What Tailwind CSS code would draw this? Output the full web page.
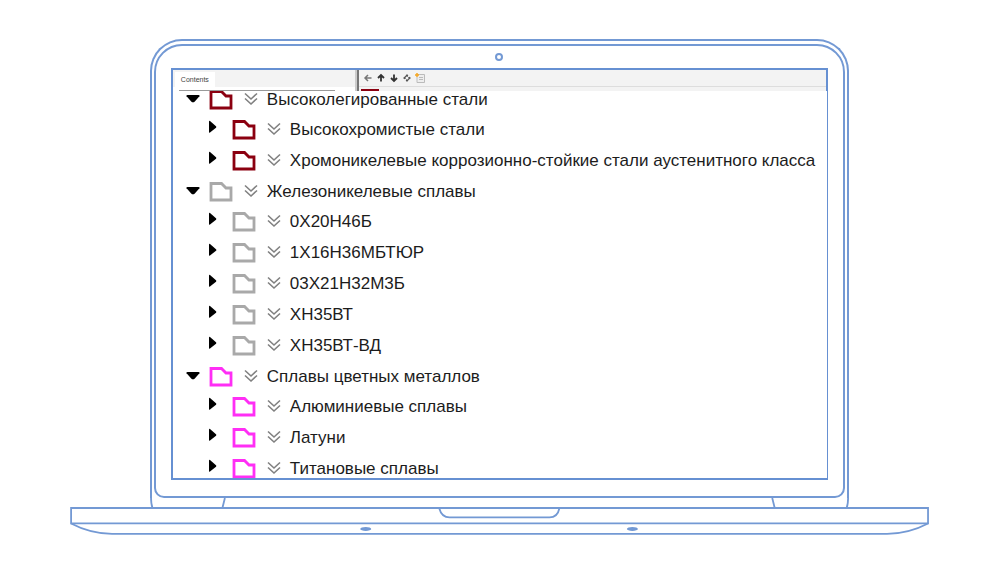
<!DOCTYPE html>
<html lang="ru">
<head>
    <meta charset="UTF-8">
    <meta name="viewport" content="width=device-width, initial-scale=1">
    <title>Классификатор материалов</title>
    <script src="https://cdn.jsdelivr.net/npm/@tailwindcss/browser@4"></script>
</head>
<body class="bg-white font-['Liberation_Sans',Arial,sans-serif] text-[#1c1c1c]">

    <!-- Иконки -->
    <svg class="hidden">
        <symbol id="open" viewBox="0 0 14 20"><path d="M0.6 6.2Q0 5 1.500 5H12.500Q14 5 13.400 6.200L8.800 11.500Q7 13.200 5.200 11.500Z"/></symbol>
        <symbol id="closed" viewBox="0 0 14 20"><path d="M0 1.500Q0 0.300 1 1L7 6.200Q7.800 7 7 7.800L1 12.500Q0 13.200 0 12Z"/></symbol>
        <symbol id="folder" viewBox="0 0 24 20"><path d="M2 1.500H12.500L17 6H22V18H2Z" fill="none" stroke="currentColor" stroke-width="2.800"/></symbol>
        <symbol id="chevrons" viewBox="0 0 14 20"><path d="M1 3.500L7 9L13 3.500M1 8.500L7 14L13 8.500" fill="none" stroke="currentColor" stroke-width="1.600"/></symbol>
    </svg>

    <main class="pt-[39px] pr-px">
        <!-- Крышка ноутбука -->
        <div class="mx-auto w-[70%] rounded-t-[32px] border-2 border-b-0 border-[#7399d4] px-[2px] pt-[3px]">
            <div class="rounded-t-[28px] rounded-b-[10px] border-2 border-[#7399d4] px-[15px] pb-4">
                <div class="flex h-[22px] items-center justify-center">
                    <span class="size-2 rounded-full border-2 border-[#7399d4]"></span>
                </div>

                <!-- Экран -->
                <div class="border-2 border-r border-[#6690d2]">
                    <div class="flex h-[21px] bg-[#f3f3f3]">
                        <div class="flex w-[182px] shrink-0 flex-col bg-white">
                            <div class="flex h-[17px] items-end bg-[#f3f3f3] pl-[2px]">
                                <button class="h-[15px] bg-white px-[6px] text-[7px] leading-[13px] text-[#444]">Contents</button>
                            </div>
                            <div class="mr-5 ml-[6px] h-[4px] border-b border-[#999]"></div>
                        </div>
                        <div class="w-[4px] shrink-0 border-r-2 border-[#777] bg-[#ccc]"></div>
                        <div class="flex grow flex-col border-r border-[#6690d2]">
                            <div class="flex h-[17px] items-center gap-[3px] border-b border-[#ddd] pl-1 text-[#333]">
                                <button aria-label="Назад" class="text-[#777]"><svg class="size-[10px]" viewBox="0 0 10 10" fill="none" stroke="currentColor" stroke-width="1.500"><path d="M8.500 5H2M5 2L2 5L5 8"/></svg></button>
                                <button aria-label="Вверх"><svg class="size-[10px]" viewBox="0 0 10 10" fill="none" stroke="currentColor" stroke-width="1.800"><path d="M5 8.500V2.500M2 5L5 2L8 5"/></svg></button>
                                <button aria-label="Вниз"><svg class="size-[10px]" viewBox="0 0 10 10" fill="none" stroke="currentColor" stroke-width="1.800"><path d="M5 1.500V7.500M2 5L5 8L8 5"/></svg></button>
                                <button aria-label="Найти в дереве"><svg class="size-[10px]" viewBox="0 0 10 10" fill="#555"><path d="M5 1L7.500 4H2.500ZM5 9L7.500 6H2.500ZM1 5L4 2.500V7.500ZM9 5L6 2.500V7.500Z"/><circle cx="5" cy="5" r="1.500" fill="#f3f3f3"/></svg></button>
                                <button aria-label="Добавить"><svg class="size-[10px]" viewBox="0 0 10 10"><path d="M3 1.500H9.500V9.500H2V4" fill="#eee" stroke="#bbb"/><path d="M4 4.500H8M4 6.500H8" stroke="#bbb"/><path d="M0 2H4M2 0V4" stroke="#f5a623" stroke-width="1.500"/></svg></button>
                            </div>
                            <div class="mt-[2px] ml-[2px] h-[2px] w-[18px] bg-[#8b0010]"></div>
                        </div>
                    </div>

                    <!-- Дерево материалов -->
                    <div class="h-[387px] overflow-hidden">
                        <ul class="-mt-[7px] pl-[13px] text-[17px] whitespace-nowrap">
                            <li>
                                <div class="flex h-[30px] items-center pt-[2px]">
                                    <button aria-label="Свернуть"><svg class="h-5 w-[14px]"><use href="#open"/></svg></button>
                                    <svg class="ml-[9px] h-5 w-6 text-[#8b0010]"><use href="#folder"/></svg>
                                    <button aria-label="Развернуть все" class="mr-[9px] ml-[11px] text-[#808080]"><svg class="h-5 w-[14px]"><use href="#chevrons"/></svg></button>
                                    <span class="leading-[16px]">Высоколегированные стали</span>
                                </div>
                                <ul class="pl-[23px]">
                                    <li class="flex h-[31px] items-center">
                                        <button aria-label="Развернуть"><svg class="h-5 w-[14px]"><use href="#closed"/></svg></button>
                                        <svg class="ml-[9px] h-5 w-6 text-[#8b0010]"><use href="#folder"/></svg>
                                        <button aria-label="Развернуть все" class="mr-[9px] ml-[11px] text-[#808080]"><svg class="h-5 w-[14px]"><use href="#chevrons"/></svg></button>
                                        <span>Высокохромистые стали</span>
                                    </li>
                                    <li class="flex h-[31px] items-center">
                                        <button aria-label="Развернуть"><svg class="h-5 w-[14px]"><use href="#closed"/></svg></button>
                                        <svg class="ml-[9px] h-5 w-6 text-[#8b0010]"><use href="#folder"/></svg>
                                        <button aria-label="Развернуть все" class="mr-[9px] ml-[11px] text-[#808080]"><svg class="h-5 w-[14px]"><use href="#chevrons"/></svg></button>
                                        <span>Хромоникелевые коррозионно-стойкие стали аустенитного класса</span>
                                    </li>
                                </ul>
                            </li>
                            <li>
                                <div class="flex h-[30px] items-center pt-[2px]">
                                    <button aria-label="Свернуть"><svg class="h-5 w-[14px]"><use href="#open"/></svg></button>
                                    <svg class="ml-[9px] h-5 w-6 text-[#a9a9a9]"><use href="#folder"/></svg>
                                    <button aria-label="Развернуть все" class="mr-[9px] ml-[11px] text-[#808080]"><svg class="h-5 w-[14px]"><use href="#chevrons"/></svg></button>
                                    <span class="leading-[16px]">Железоникелевые сплавы</span>
                                </div>
                                <ul class="pl-[23px]">
                                    <li class="flex h-[31px] items-center">
                                        <button aria-label="Развернуть"><svg class="h-5 w-[14px]"><use href="#closed"/></svg></button>
                                        <svg class="ml-[9px] h-5 w-6 text-[#a9a9a9]"><use href="#folder"/></svg>
                                        <button aria-label="Развернуть все" class="mr-[9px] ml-[11px] text-[#808080]"><svg class="h-5 w-[14px]"><use href="#chevrons"/></svg></button>
                                        <span>0Х20Н46Б</span>
                                    </li>
                                    <li class="flex h-[31px] items-center">
                                        <button aria-label="Развернуть"><svg class="h-5 w-[14px]"><use href="#closed"/></svg></button>
                                        <svg class="ml-[9px] h-5 w-6 text-[#a9a9a9]"><use href="#folder"/></svg>
                                        <button aria-label="Развернуть все" class="mr-[9px] ml-[11px] text-[#808080]"><svg class="h-5 w-[14px]"><use href="#chevrons"/></svg></button>
                                        <span>1Х16Н36МБТЮР</span>
                                    </li>
                                    <li class="flex h-[31px] items-center">
                                        <button aria-label="Развернуть"><svg class="h-5 w-[14px]"><use href="#closed"/></svg></button>
                                        <svg class="ml-[9px] h-5 w-6 text-[#a9a9a9]"><use href="#folder"/></svg>
                                        <button aria-label="Развернуть все" class="mr-[9px] ml-[11px] text-[#808080]"><svg class="h-5 w-[14px]"><use href="#chevrons"/></svg></button>
                                        <span>03Х21Н32М3Б</span>
                                    </li>
                                    <li class="flex h-[31px] items-center">
                                        <button aria-label="Развернуть"><svg class="h-5 w-[14px]"><use href="#closed"/></svg></button>
                                        <svg class="ml-[9px] h-5 w-6 text-[#a9a9a9]"><use href="#folder"/></svg>
                                        <button aria-label="Развернуть все" class="mr-[9px] ml-[11px] text-[#808080]"><svg class="h-5 w-[14px]"><use href="#chevrons"/></svg></button>
                                        <span>ХН35ВТ</span>
                                    </li>
                                    <li class="flex h-[31px] items-center">
                                        <button aria-label="Развернуть"><svg class="h-5 w-[14px]"><use href="#closed"/></svg></button>
                                        <svg class="ml-[9px] h-5 w-6 text-[#a9a9a9]"><use href="#folder"/></svg>
                                        <button aria-label="Развернуть все" class="mr-[9px] ml-[11px] text-[#808080]"><svg class="h-5 w-[14px]"><use href="#chevrons"/></svg></button>
                                        <span>ХН35ВТ-ВД</span>
                                    </li>
                                </ul>
                            </li>
                            <li>
                                <div class="flex h-[30px] items-center pt-[2px]">
                                    <button aria-label="Свернуть"><svg class="h-5 w-[14px]"><use href="#open"/></svg></button>
                                    <svg class="ml-[9px] h-5 w-6 text-[#ff2ef5]"><use href="#folder"/></svg>
                                    <button aria-label="Развернуть все" class="mr-[9px] ml-[11px] text-[#808080]"><svg class="h-5 w-[14px]"><use href="#chevrons"/></svg></button>
                                    <span class="leading-[16px]">Сплавы цветных металлов</span>
                                </div>
                                <ul class="pl-[23px]">
                                    <li class="flex h-[31px] items-center">
                                        <button aria-label="Развернуть"><svg class="h-5 w-[14px]"><use href="#closed"/></svg></button>
                                        <svg class="ml-[9px] h-5 w-6 text-[#ff2ef5]"><use href="#folder"/></svg>
                                        <button aria-label="Развернуть все" class="mr-[9px] ml-[11px] text-[#808080]"><svg class="h-5 w-[14px]"><use href="#chevrons"/></svg></button>
                                        <span>Алюминиевые сплавы</span>
                                    </li>
                                    <li class="flex h-[31px] items-center">
                                        <button aria-label="Развернуть"><svg class="h-5 w-[14px]"><use href="#closed"/></svg></button>
                                        <svg class="ml-[9px] h-5 w-6 text-[#ff2ef5]"><use href="#folder"/></svg>
                                        <button aria-label="Развернуть все" class="mr-[9px] ml-[11px] text-[#808080]"><svg class="h-5 w-[14px]"><use href="#chevrons"/></svg></button>
                                        <span>Латуни</span>
                                    </li>
                                    <li class="flex h-[31px] items-center">
                                        <button aria-label="Развернуть"><svg class="h-5 w-[14px]"><use href="#closed"/></svg></button>
                                        <svg class="ml-[9px] h-5 w-6 text-[#ff2ef5]"><use href="#folder"/></svg>
                                        <button aria-label="Развернуть все" class="mr-[9px] ml-[11px] text-[#808080]"><svg class="h-5 w-[14px]"><use href="#chevrons"/></svg></button>
                                        <span>Титановые сплавы</span>
                                    </li>
                                </ul>
                            </li>
                        </ul>
                    </div>
                </div>
            </div>
        </div>

        <!-- Основание -->
        <svg class="-mt-px mx-auto w-[86%]" viewBox="0 0 860 38" fill="none" stroke="#7399d4" stroke-width="1.800">
            <path d="M81 0Q81 7 82.500 11M779 0Q779 7 777.500 11M155 1L152.500 11M703 1L705.500 11"/>
            <path d="M1 11H859V26.500H1Z"/>
            <path d="M1 26.500Q20 36.500 42 37H818Q840 36.500 859 26.500"/>
            <path d="M369.500 11Q372 20.500 380 20.500H480Q488 20.500 490 11"/>
            <g fill="#7399d4" stroke="none"><ellipse cx="296" cy="32" rx="5.500" ry="2"/><ellipse cx="563" cy="32" rx="5.500" ry="2"/></g>
        </svg>
    </main>
</body>
</html>
